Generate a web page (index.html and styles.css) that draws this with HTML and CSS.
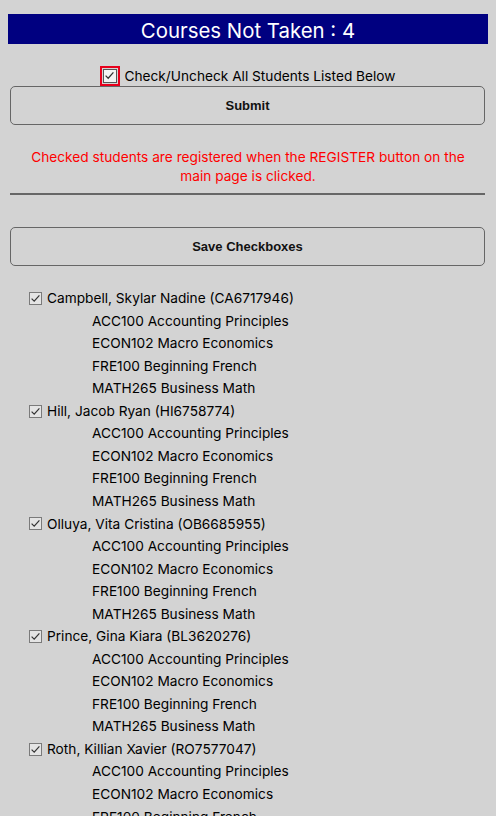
FILE: index.html
```html
<!DOCTYPE html>
<html>
<head>
<meta charset="utf-8">
<link rel="stylesheet" href="styles.css">
</head>
<body>
<div class="page">
  <h1 class="title">Courses Not Taken : 4</h1>
  <div class="checkall">
    <label class="checkall-label">
      <span class="redbox"><span class="cb cb-white"><svg viewBox="0 0 13 13" width="13" height="13"><path d="M2.6 6.6 L5.2 9.2 L10.4 3.4" fill="none" stroke="#333" stroke-width="1.3"/></svg></span></span>
      <span>Check/Uncheck All Students Listed Below</span>
    </label>
  </div>
  <button class="btn">Submit</button>
  <p class="notice">Checked students are registered when the REGISTER button on the main page is clicked.</p>
  <hr class="rule">
  <button class="btn btn-save">Save Checkboxes</button>
  <ul class="students">
    <li class="student">
      <label class="name"><span class="cb"><svg viewBox="0 0 13 13" width="13" height="13"><path d="M2.6 6.6 L5.2 9.2 L10.4 3.4" fill="none" stroke="#333" stroke-width="1.2"/></svg></span>Campbell, Skylar Nadine (CA6717946)</label>
      <div class="course">ACC100 Accounting Principles</div>
      <div class="course">ECON102 Macro Economics</div>
      <div class="course">FRE100 Beginning French</div>
      <div class="course">MATH265 Business Math</div>
    </li>
    <li class="student">
      <label class="name"><span class="cb"><svg viewBox="0 0 13 13" width="13" height="13"><path d="M2.6 6.6 L5.2 9.2 L10.4 3.4" fill="none" stroke="#333" stroke-width="1.2"/></svg></span>Hill, Jacob Ryan (HI6758774)</label>
      <div class="course">ACC100 Accounting Principles</div>
      <div class="course">ECON102 Macro Economics</div>
      <div class="course">FRE100 Beginning French</div>
      <div class="course">MATH265 Business Math</div>
    </li>
    <li class="student">
      <label class="name"><span class="cb"><svg viewBox="0 0 13 13" width="13" height="13"><path d="M2.6 6.6 L5.2 9.2 L10.4 3.4" fill="none" stroke="#333" stroke-width="1.2"/></svg></span>Olluya, Vita Cristina (OB6685955)</label>
      <div class="course">ACC100 Accounting Principles</div>
      <div class="course">ECON102 Macro Economics</div>
      <div class="course">FRE100 Beginning French</div>
      <div class="course">MATH265 Business Math</div>
    </li>
    <li class="student">
      <label class="name"><span class="cb"><svg viewBox="0 0 13 13" width="13" height="13"><path d="M2.6 6.6 L5.2 9.2 L10.4 3.4" fill="none" stroke="#333" stroke-width="1.2"/></svg></span>Prince, Gina Kiara (BL3620276)</label>
      <div class="course">ACC100 Accounting Principles</div>
      <div class="course">ECON102 Macro Economics</div>
      <div class="course">FRE100 Beginning French</div>
      <div class="course">MATH265 Business Math</div>
    </li>
    <li class="student">
      <label class="name"><span class="cb"><svg viewBox="0 0 13 13" width="13" height="13"><path d="M2.6 6.6 L5.2 9.2 L10.4 3.4" fill="none" stroke="#333" stroke-width="1.2"/></svg></span>Roth, Killian Xavier (RO7577047)</label>
      <div class="course">ACC100 Accounting Principles</div>
      <div class="course">ECON102 Macro Economics</div>
      <div class="course">FRE100 Beginning French</div>
      <div class="course">MATH265 Business Math</div>
    </li>
  </ul>
</div>
</body>
</html>
```
FILE: styles.css
```css
html, body {
  margin: 0;
  padding: 0;
  background: #d3d3d3;
}
body {
  font-family: Inter, "Noto Sans", sans-serif;
  color: #000;
  overflow: hidden;
}
.page {
  padding: 14px 8px 0 8px;
}
.title {
  margin: 0;
  background: #000080;
  color: #fff;
  height: 30px;
  line-height: 33px;
  text-align: center;
  font-size: 20.4px;
  font-weight: 400;
}
.checkall {
  margin-top: 22px;
  text-align: center;
  font-size: 13.7px;
  height: 20px;
}
.checkall-label {
  display: inline-flex;
  align-items: center;
  gap: 4px;
  height: 20px;
}
.redbox {
  display: inline-flex;
  border: 2px solid #e8001c;
  width: 16px;
  height: 16px;
  align-items: center;
  justify-content: center;
}
.cb {
  display: inline-block;
  box-sizing: border-box;
  width: 13px;
  height: 13px;
  border: 1px solid #7a7a7a;
  background: #e4e4e4;
  overflow: hidden;
}
.cb svg {
  display: block;
  margin: -1px 0 0 -1px;
}
.cb-white {
  width: 14px;
  height: 14px;
  background: #f4f4f4;
  border-color: #555;
}
.btn {
  display: block;
  width: 475px;
  margin: 0 0 0 2px;
  height: 39px;
  background: #d3d3d3;
  border: 1px solid #666;
  border-radius: 5px;
  font-family: "Liberation Sans", Arial, sans-serif;
  font-weight: 700;
  font-size: 13px;
  color: #111;
}
.notice {
  margin: 23px 0 0 0;
  color: #ff0000;
  text-align: center;
  font-size: 13.7px;
  line-height: 19px;
  padding: 0 16px;
}
.rule {
  margin: 7px 3px 0 2px;
  border: 0;
  border-top: 2px solid #666;
  height: 0;
}
.btn-save {
  margin-top: 32px;
}
.students {
  list-style: none;
  margin: 21px 0 0 0;
  padding: 0 0 0 21px;
  font-size: 13.7px;
}
.student .name {
  display: flex;
  align-items: center;
  gap: 5px;
  height: 22.55px;
}
.course {
  height: 22.55px;
  line-height: 22.55px;
  padding-left: 63px;
}
```
